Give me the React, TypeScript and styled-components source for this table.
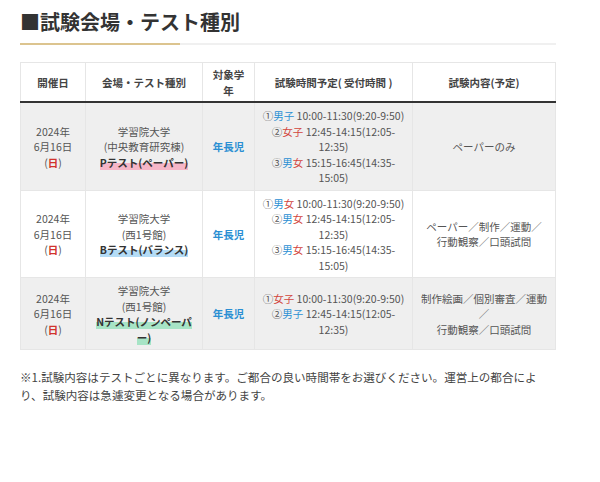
import React from "react";
import styled, { createGlobalStyle } from "styled-components";

const Global = createGlobalStyle`
  html, body { margin: 0; padding: 0; background: #fff; }
  body { font-family: "Noto Sans CJK JP", "Noto Sans", sans-serif; color: #555; }
`;

const Page = styled.div`
  padding: 8px 44px 0 20px;
  width: 536px;
`;

const Title = styled.h2`
  margin: 0;
  font-size: 20px;
  line-height: 28px;
  font-weight: 700;
  color: #333;
`;

const Rule = styled.div`
  display: flex;
  margin-top: 7px;
  height: 2px;
`;

const RuleSeg = styled.div<{ $gold?: boolean }>`
  height: 2px;
  background: ${(p) => (p.$gold ? "#dcc48f" : "#f0f0f0")};
  ${(p) => (p.$gold ? "width: 160px;" : "flex: 1;")}
`;

const Table = styled.table`
  margin-top: 17px;
  width: 536px;
  border-collapse: collapse;
  table-layout: fixed;
  font-size: 10.5px;
  line-height: 15.5px;
  border-right: 1px solid #444;
`;

const Th = styled.th`
  padding: 4px 6px 3px;
  font-weight: 700;
  color: #444;
  background: #fff;
  border: 1px solid #e6e6e6;
  border-bottom: 2px solid #333;
  text-align: center;
  vertical-align: middle;
`;

const Tr = styled.tr<{ $gray?: boolean }>`
  background: ${(p) => (p.$gray ? "#efefef" : "#fff")};
`;

const Td = styled.td`
  padding: 5px 7px 4px;
  border: 1px solid #e6e6e6;
  text-align: center;
  vertical-align: middle;
  color: #555;
  word-break: break-all;
`;

const Red = styled.span`
  color: #d2332c;
  font-weight: 700;
`;

const Grade = styled.span`
  color: #2b8fd3;
  font-weight: 700;
`;

const Sex = styled.span<{ $c: "m" | "f" }>`
  color: ${(p) => (p.$c === "m" ? "#2b8fd3" : "#d2453c")};
`;

const TestName = styled.span<{ $hl: string }>`
  font-weight: 700;
  color: #333;
  background: linear-gradient(transparent 55%, ${(p) => p.$hl} 55%);
`;

const TimeCell = styled(Td)`
  padding-left: 5px;
  padding-right: 5px;
  word-break: normal;
`;

const Note = styled.p`
  margin: 18px 10px 0 0;
  font-size: 11.55px;
  line-height: 18px;
  color: #444;
`;

type Slot = { n: string; who: ("m" | "f")[]; time: string };

const sexLabel = (w: ("m" | "f")[]) => {
  if (w.length === 2) return [<Sex key="a" $c="m">男</Sex>, <Sex key="b" $c="f">女</Sex>];
  return w[0] === "m" ? [<Sex key="a" $c="m">男子</Sex>] : [<Sex key="a" $c="f">女子</Sex>];
};

const Times = ({ slots }: { slots: Slot[] }) => (
  <>
    {slots.map((s, i) => (
      <div key={i}>
        {s.n}
        {sexLabel(s.who)} {s.time}
      </div>
    ))}
  </>
);

const DateCell = () => (
  <Td>
    2024年
    <br />
    6月16日
    <br />(<Red>日</Red>)
  </Td>
);

export default function App() {
  return (
    <Page>
      <Global />
      <Title>■試験会場・テスト種別</Title>
      <Rule>
        <RuleSeg $gold />
        <RuleSeg />
      </Rule>
      <Table>
        <colgroup>
          <col style={{ width: 65 }} />
          <col style={{ width: 117 }} />
          <col style={{ width: 52 }} />
          <col style={{ width: 158 }} />
          <col style={{ width: 143 }} />
        </colgroup>
        <thead>
          <tr>
            <Th>開催日</Th>
            <Th>会場・テスト種別</Th>
            <Th>対象学年</Th>
            <Th>試験時間予定( 受付時間 )</Th>
            <Th>試験内容(予定)</Th>
          </tr>
        </thead>
        <tbody>
          <Tr $gray>
            <DateCell />
            <Td>
              学習院大学
              <br />
              (中央教育研究棟)
              <br />
              <TestName $hl="#f6b6c7">Pテスト(ペーパー)</TestName>
            </Td>
            <Td>
              <Grade>年長児</Grade>
            </Td>
            <TimeCell>
              <Times
                slots={[
                  { n: "①", who: ["m"], time: "10:00-11:30(9:20-9:50)" },
                  { n: "②", who: ["f"], time: "12:45-14:15(12:05-12:35)" },
                  { n: "③", who: ["m", "f"], time: "15:15-16:45(14:35-15:05)" },
                ]}
              />
            </TimeCell>
            <Td>ペーパーのみ</Td>
          </Tr>
          <Tr>
            <DateCell />
            <Td>
              学習院大学
              <br />
              (西1号館)
              <br />
              <TestName $hl="#b4dcf6">Bテスト(バランス)</TestName>
            </Td>
            <Td>
              <Grade>年長児</Grade>
            </Td>
            <TimeCell>
              <Times
                slots={[
                  { n: "①", who: ["m", "f"], time: "10:00-11:30(9:20-9:50)" },
                  { n: "②", who: ["m", "f"], time: "12:45-14:15(12:05-12:35)" },
                  { n: "③", who: ["m", "f"], time: "15:15-16:45(14:35-15:05)" },
                ]}
              />
            </TimeCell>
            <Td>
              ペーパー／制作／運動／
              <br />
              行動観察／口頭試問
            </Td>
          </Tr>
          <Tr $gray>
            <DateCell />
            <Td>
              学習院大学
              <br />
              (西1号館)
              <br />
              <TestName $hl="#a7e4c6">Nテスト(ノンペーパー)</TestName>
            </Td>
            <Td>
              <Grade>年長児</Grade>
            </Td>
            <TimeCell>
              <Times
                slots={[
                  { n: "①", who: ["f"], time: "10:00-11:30(9:20-9:50)" },
                  { n: "②", who: ["m"], time: "12:45-14:15(12:05-12:35)" },
                ]}
              />
            </TimeCell>
            <Td>
              制作絵画／個別審査／運動／
              <br />
              行動観察／口頭試問
            </Td>
          </Tr>
        </tbody>
      </Table>
      <Note>
        ※1.試験内容はテストごとに異なります。ご都合の良い時間帯をお選びください。運営上の都合により、試験内容は急遽変更となる場合があります。
      </Note>
    </Page>
  );
}
